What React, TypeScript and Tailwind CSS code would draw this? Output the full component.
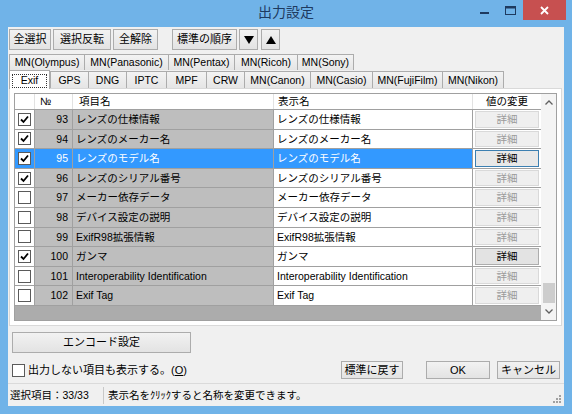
import clsx from "clsx";
import type { ReactNode } from "react";

type Row = { no: number; name: string; checked: boolean; editable?: boolean; selected?: boolean };

const rows: Row[] = [
  { no: 93, name: "レンズの仕様情報", checked: true },
  { no: 94, name: "レンズのメーカー名", checked: true },
  { no: 95, name: "レンズのモデル名", checked: true, editable: true, selected: true },
  { no: 96, name: "レンズのシリアル番号", checked: true },
  { no: 97, name: "メーカー依存データ", checked: false },
  { no: 98, name: "デバイス設定の説明", checked: false },
  { no: 99, name: "ExifR98拡張情報", checked: false },
  { no: 100, name: "ガンマ", checked: true, editable: true },
  { no: 101, name: "Interoperability Identification", checked: false },
  { no: 102, name: "Exif Tag", checked: false },
];

const backTabs = [
  { label: "MN(Olympus)", w: "w-[76px]" },
  { label: "MN(Panasonic)", w: "w-[85px]" },
  { label: "MN(Pentax)", w: "w-[67px]" },
  { label: "MN(Ricoh)", w: "w-[64px]" },
  { label: "MN(Sony)", w: "w-[57px]" },
];

const frontTabs = [
  { label: "GPS", w: "w-[39px]" },
  { label: "DNG", w: "w-[39px]" },
  { label: "IPTC", w: "w-[41px]" },
  { label: "MPF", w: "w-[41px]" },
  { label: "CRW", w: "w-[39px]" },
  { label: "MN(Canon)", w: "w-[67px]" },
  { label: "MN(Casio)", w: "w-[63px]" },
  { label: "MN(FujiFilm)", w: "w-[71px]" },
  { label: "MN(Nikon)", w: "w-[62px]" },
];

function WinButton({ className, children }: { className?: string; children: ReactNode }) {
  return (
    <button
      type="button"
      className={clsx(
        "flex items-center justify-center border border-[#acacac] bg-linear-to-b from-[#f2f2f2] to-[#e3e3e3] text-[11px] leading-none text-black",
        className,
      )}
    >
      {children}
    </button>
  );
}

function CheckBox({ checked }: { checked: boolean }) {
  return (
    <span className="flex h-[13px] w-[13px] items-center justify-center border border-[#5a5a5a] bg-white">
      {checked && (
        <svg width="11" height="11" viewBox="0 0 11 11">
          <path d="M2 5.5 L4.5 8 L9 2.5" fill="none" stroke="#000" strokeWidth="1.8" />
        </svg>
      )}
    </span>
  );
}

function Tab({ label, w }: { label: string; w: string }) {
  return (
    <div
      className={clsx(
        "-ml-px flex h-full items-center justify-center border border-b-0 border-[#acacac] bg-linear-to-b from-[#f3f3f3] to-[#e5e5e5] text-[10.5px] leading-none first:ml-0",
        w,
      )}
    >
      {label}
    </div>
  );
}

function Grid() {
  return (
    <div className="flex h-full border border-[#a0a0a0] text-[10.5px] leading-none">
      <div className="flex w-[526px] flex-col">
        <div className="flex h-[16px] border-b border-[#a0a0a0] bg-white">
          <div className="w-[20px] border-r border-[#e2e2e2]" />
          <div className="flex w-[38px] items-center border-r border-[#e2e2e2] pl-[5px]">№</div>
          <div className="flex w-[201px] items-center border-r border-[#e2e2e2] pl-[6px]">項目名</div>
          <div className="flex w-[199px] items-center border-r border-[#e2e2e2] pl-[4px]">表示名</div>
          <div className="flex w-[68px] items-center justify-center">値の変更</div>
        </div>
        {rows.map((r) => (
          <div key={r.no} className="flex h-[19.6px] border-b border-[#a0a0a0]">
            <div
              className={clsx(
                "flex w-[20px] items-center justify-center border-r border-[#a0a0a0]",
                r.selected ? "bg-[#3399ff]" : "bg-white",
              )}
            >
              <CheckBox checked={r.checked} />
            </div>
            <div
              className={clsx(
                "flex w-[38px] items-center justify-end border-r border-[#a0a0a0] pr-[4px]",
                r.selected ? "bg-[#3399ff] text-white" : "bg-[#bebebe]",
              )}
            >
              {r.no}
            </div>
            <div
              className={clsx(
                "flex w-[201px] items-center border-r border-[#a0a0a0] pl-[3px]",
                r.selected ? "bg-[#3399ff] text-white" : "bg-[#bebebe]",
              )}
            >
              {r.name}
            </div>
            <div
              className={clsx(
                "flex w-[199px] items-center border-r border-[#a0a0a0] pl-[3px]",
                r.selected ? "bg-[#3399ff] text-white" : "bg-white",
              )}
            >
              {r.name}
            </div>
            <div className="w-[68px] bg-white px-[2px] py-[1px]">
              <div
                className={clsx(
                  "flex h-full items-center justify-center border",
                  r.selected
                    ? "border-[#3c7fb1] bg-[#e8e8e8] text-black"
                    : r.editable
                      ? "border-[#adadad] bg-[#e3e3e3] text-black"
                      : "border-[#d9d9d9] bg-[#efefef] text-[#9a9a9a]",
                )}
              >
                詳細
              </div>
            </div>
          </div>
        ))}
        <div className="flex-1 bg-[#acacac]" />
      </div>
      <div className="flex w-[15px] flex-col bg-[#f4f4f4]">
        <div className="flex h-[17px] items-center justify-center">
          <svg width="8" height="5" viewBox="0 0 8 5">
            <path d="M0.5 4.5 L4 1 L7.5 4.5" fill="none" stroke="#606060" strokeWidth="1.3" />
          </svg>
        </div>
        <div className="flex flex-1 flex-col justify-end">
          <div className="ml-[2px] h-[20px] w-[12px] bg-[#cdcdcd]" />
        </div>
        <div className="flex h-[17px] items-center justify-center">
          <svg width="8" height="5" viewBox="0 0 8 5">
            <path d="M0.5 0.5 L4 4 L7.5 0.5" fill="none" stroke="#606060" strokeWidth="1.3" />
          </svg>
        </div>
      </div>
    </div>
  );
}

export default function App() {
  return (
    <div className="flex h-[414px] w-[572px] flex-col bg-[#70b3e8] pb-[8px] font-['Liberation_Sans','Noto_Sans_CJK_JP',sans-serif] text-black">
      <div className="grid h-[27px] grid-cols-[1fr_auto_1fr]">
        <div />
        <div className="pt-[5px] text-[14px] leading-none text-[#1e3a5f]">出力設定</div>
        <div className="flex items-start justify-end pr-[6px]">
          <div className="flex h-[20px] w-[26px] items-center justify-center">
            <svg width="9" height="9" viewBox="0 0 9 9">
              <rect x="0" y="6" width="9" height="2" fill="#1e3a5f" />
            </svg>
          </div>
          <div className="flex h-[20px] w-[26px] items-center justify-center">
            <svg width="11" height="9" viewBox="0 0 11 9">
              <rect x="0.5" y="0.5" width="10" height="8" fill="none" stroke="#1e3a5f" />
              <rect x="0.5" y="0.5" width="10" height="2" fill="#1e3a5f" />
            </svg>
          </div>
          <div className="flex h-[20px] w-[43px] items-center justify-center bg-[#c75050]">
            <svg width="9" height="9" viewBox="0 0 9 9">
              <path d="M1 1 L8 8 M8 1 L1 8" stroke="#fff" strokeWidth="1.8" />
            </svg>
          </div>
        </div>
      </div>

      <div className="mx-[8px] flex flex-1 flex-col bg-[#f0f0f0]">
        <div className="flex h-[23px] pl-[1px] pt-[2px]">
          <WinButton className="w-[42px]">全選択</WinButton>
          <WinButton className="ml-[2px] w-[58px]">選択反転</WinButton>
          <WinButton className="ml-[2px] w-[45px]">全解除</WinButton>
          <WinButton className="ml-[14px] w-[65px]">標準の順序</WinButton>
          <WinButton className="ml-[2px] w-[19px]">
            <svg width="10" height="8" viewBox="0 0 10 8">
              <path d="M0 0 H10 L5 8 Z" fill="#000" />
            </svg>
          </WinButton>
          <WinButton className="ml-[3px] w-[19px]">
            <svg width="10" height="8" viewBox="0 0 10 8">
              <path d="M0 8 H10 L5 0 Z" fill="#000" />
            </svg>
          </WinButton>
        </div>

        <div className="mt-[4px] flex h-[16px] pl-[1px]">
          {backTabs.map((t) => (
            <Tab key={t.label} label={t.label} w={t.w} />
          ))}
        </div>
        <div className="flex h-[18px] items-end pl-[1px]">
          <div className="relative z-10 mb-[-1px] flex h-[19px] w-[41px] items-center justify-center border border-b-0 border-[#acacac] bg-white px-[2px] pt-[1px] text-[10.5px] leading-none">
            <span className="flex h-[14px] w-full items-center justify-center border border-dotted border-[#333]">
              Exif
            </span>
          </div>
          <div className="flex h-[17px]">
            {frontTabs.map((t) => (
              <Tab key={t.label} label={t.label} w={t.w} />
            ))}
          </div>
        </div>

        <div className="ml-[1px] h-[238px] w-[553px] border border-[#d9d9d9] bg-white p-[4px]">
          <Grid />
        </div>

        <WinButton className="ml-[4px] mt-[6px] h-[21px] w-[179px] text-[10.5px]">エンコード設定</WinButton>

        <div className="mt-[6px] flex h-[22px] items-center">
          <div className="ml-[4px] flex items-center gap-[3px] text-[11px] leading-none">
            <CheckBox checked={false} />
            <span>
              出力しない項目も表示する。(<span className="underline">O</span>)
            </span>
          </div>
          <div className="ml-auto mr-[4px] flex">
            <WinButton className="h-[18px] w-[62px]">標準に戻す</WinButton>
            <WinButton className="ml-[23px] h-[18px] w-[64px]">OK</WinButton>
            <WinButton className="ml-[7px] h-[18px] w-[63px]">キャンセル</WinButton>
          </div>
        </div>

        <div className="mt-[2px] flex flex-1 items-center border-t border-[#dadada] text-[10.5px] leading-none">
          <div className="w-[95px] pl-[2px]">選択項目：33/33</div>
          <div className="h-[17px] w-px bg-[#c8c8c8]" />
          <div className="pl-[4px]">表示名をｸﾘｯｸすると名称を変更できます。</div>
          <div className="ml-auto mr-[3px] self-end pb-[3px]">
            <svg width="8" height="8" viewBox="0 0 8 8" fill="#a0a0a0">
              <rect x="6" y="0" width="2" height="2" />
              <rect x="3" y="3" width="2" height="2" />
              <rect x="6" y="3" width="2" height="2" />
              <rect x="0" y="6" width="2" height="2" />
              <rect x="3" y="6" width="2" height="2" />
              <rect x="6" y="6" width="2" height="2" />
            </svg>
          </div>
        </div>
      </div>
    </div>
  );
}
